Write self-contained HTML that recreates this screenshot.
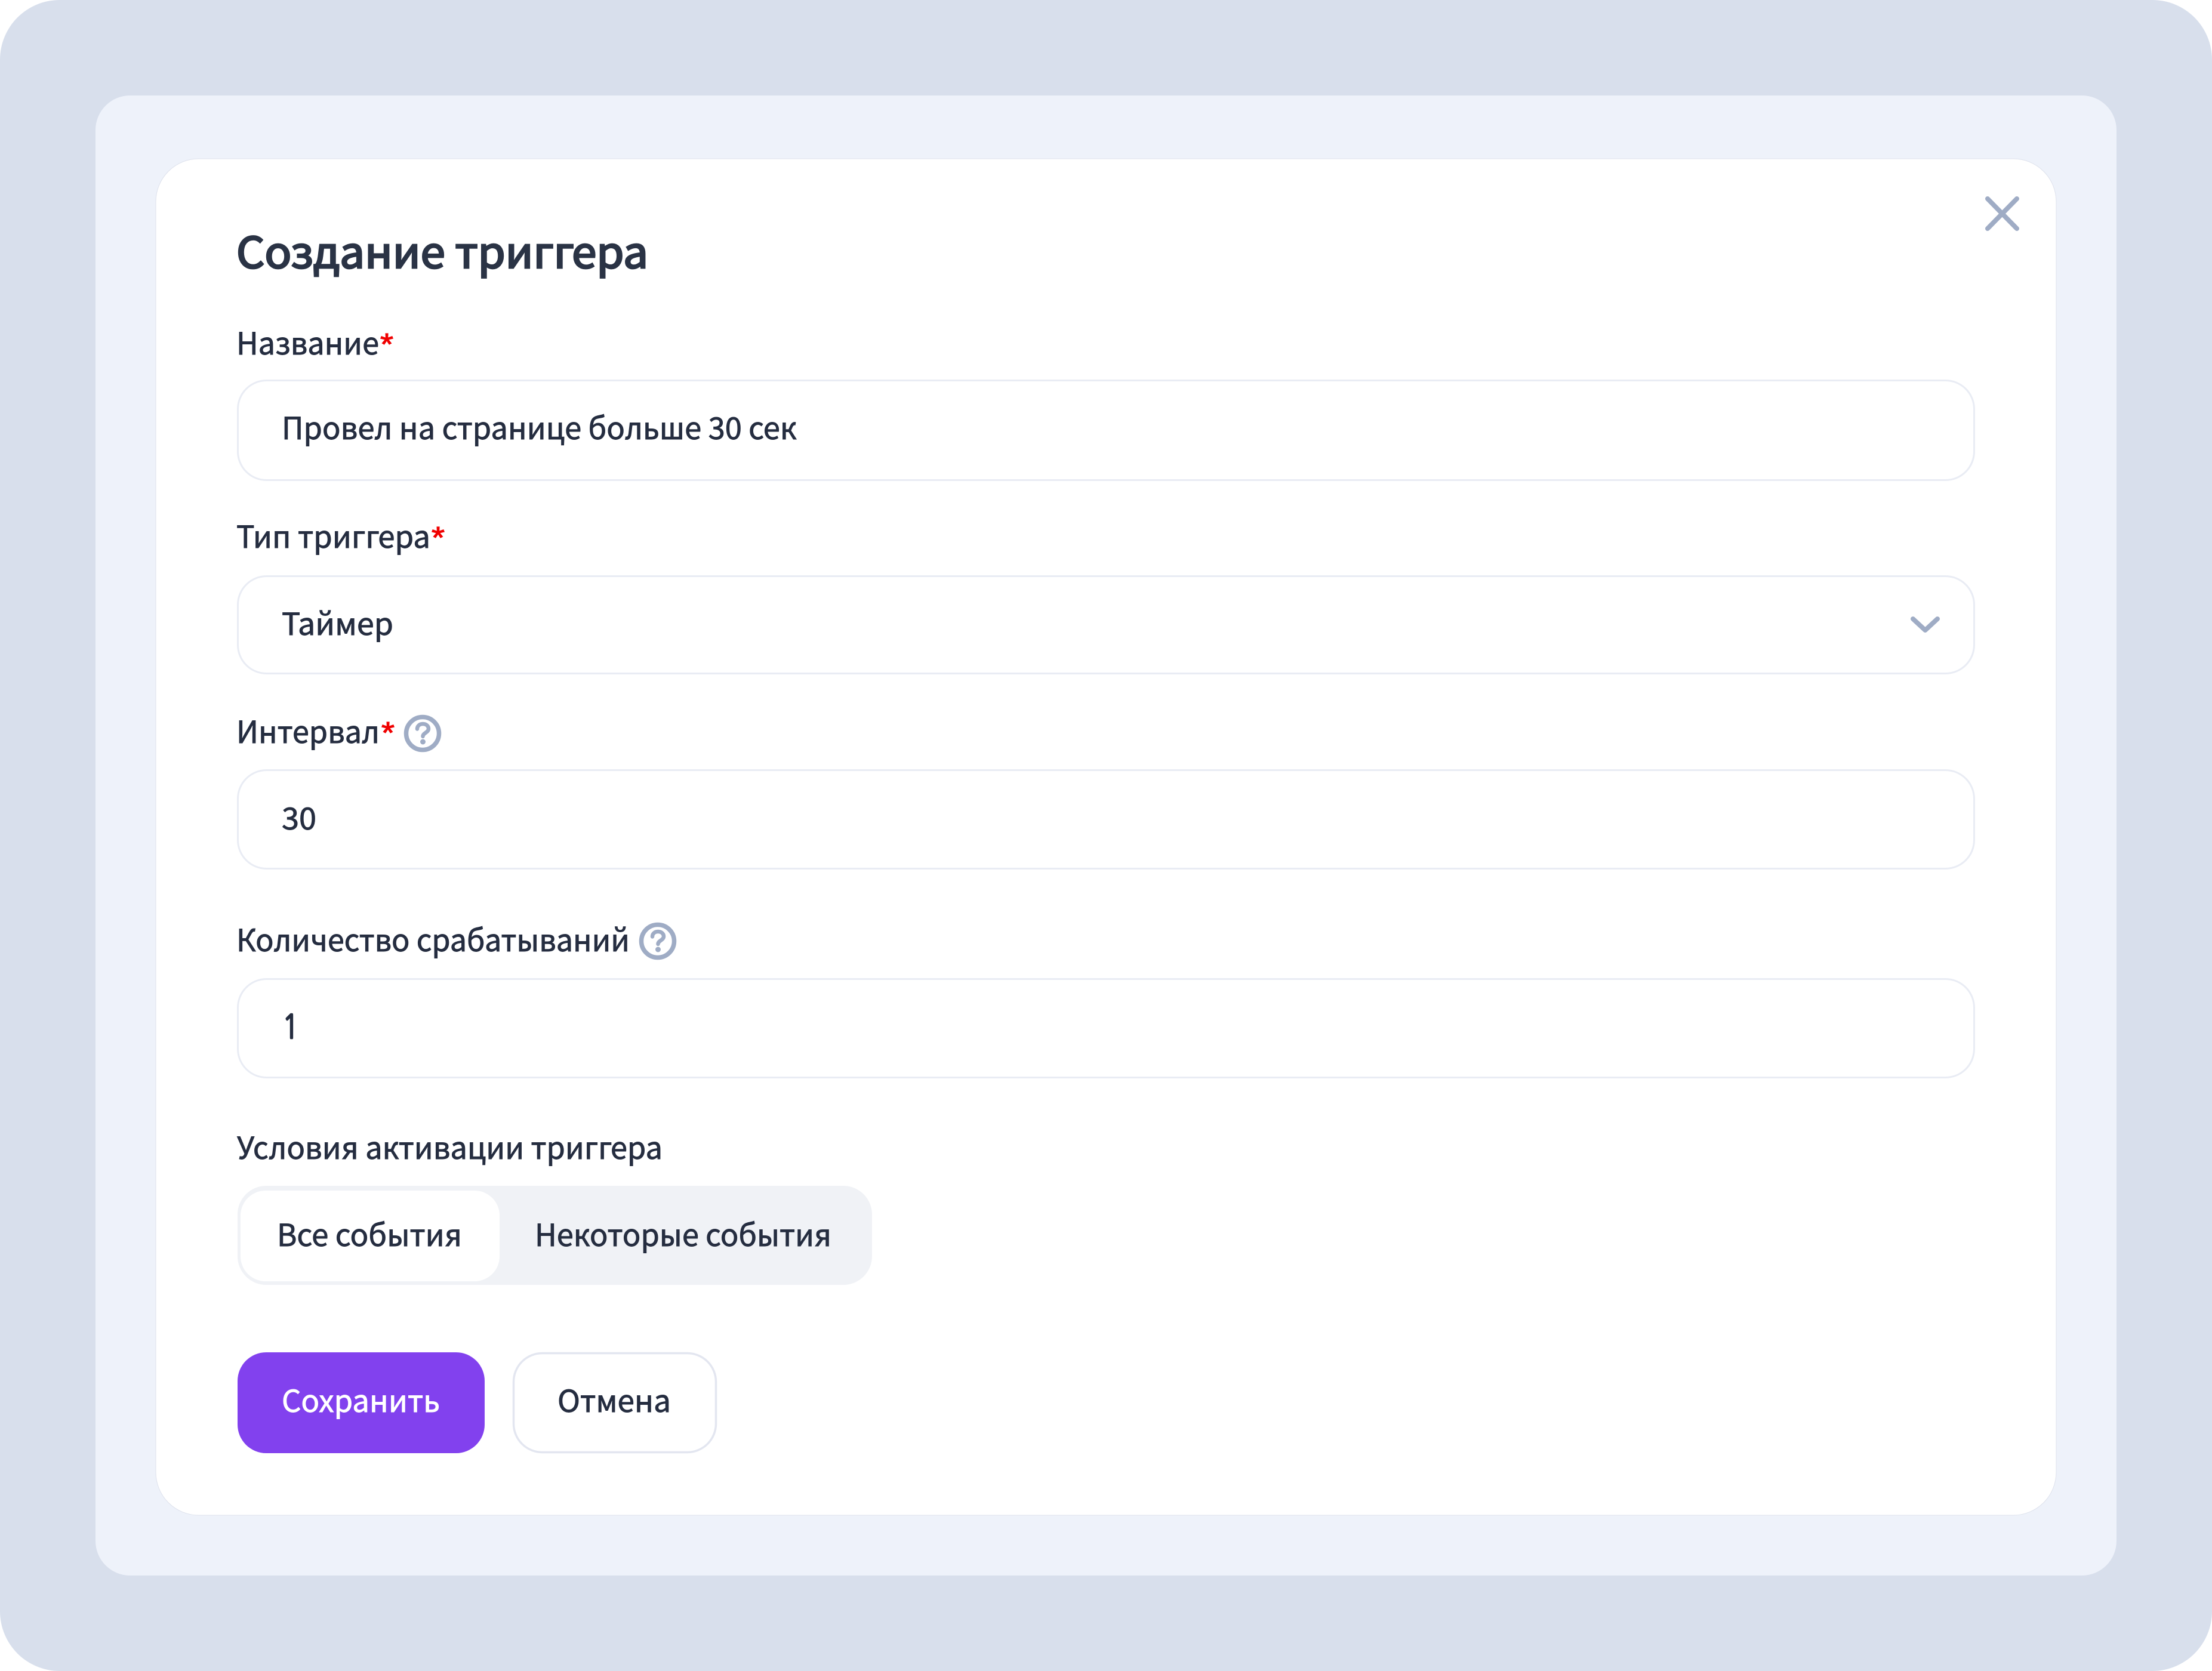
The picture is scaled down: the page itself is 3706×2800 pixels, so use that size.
<!DOCTYPE html>
<html lang="ru">
<head>
<meta charset="utf-8">
<title>Создание триггера</title>
<style>
html,body{margin:0;padding:0;background:#fff;width:3706px;height:2800px;overflow:hidden}
svg{display:block}
text{font-family:"Noto Sans CJK SC","Liberation Sans",sans-serif;font-size:51px;fill:#252D40;stroke:#252D40;stroke-width:.9px;paint-order:stroke}
.t{font-size:72px;fill:#2A3345;stroke:#2A3345;stroke-width:2.8px}
.w{fill:#fff;stroke:#fff}
.s{fill:#F00000;stroke:#F00000;font-family:"Liberation Sans",sans-serif;stroke-width:1.2px}
.n{font-family:"NanumGothic","Liberation Sans",sans-serif;font-size:55px;stroke-width:2.6px}
</style>
</head>
<body>
<svg xmlns="http://www.w3.org/2000/svg" width="3706" height="2800" viewBox="0 0 3706 2800">
<rect x="0" y="0" width="3706" height="2800" rx="100" fill="#D8DFEC"/>
<rect x="160" y="160" width="3386" height="2480" rx="58" fill="#EEF2FA"/>
<rect x="261" y="266" width="3184" height="2273" rx="72" fill="#fff" stroke="#DDE1EC" stroke-width="1"/>

<text class="t" x="396" y="449" textLength="690" lengthAdjust="spacingAndGlyphs">Создание триггера</text>

<path d="M3330 333L3379 383M3379 333L3330 383" fill="none" stroke="#9FACC5" stroke-width="8" stroke-linecap="round"/>

<text x="396" y="594" textLength="239" lengthAdjust="spacingAndGlyphs">Название</text>
<text class="s" x="637" y="594" textLength="22" lengthAdjust="spacingAndGlyphs">*</text>
<rect x="398.500" y="637.500" width="2909" height="167" rx="48" fill="#fff" stroke="#E9ECF4" stroke-width="3"/>
<text x="472" y="736" textLength="863" lengthAdjust="spacingAndGlyphs">Провел на странице больше 30 сек</text>

<text x="396" y="918" textLength="325" lengthAdjust="spacingAndGlyphs">Тип триггера</text>
<text class="s" x="723" y="918" textLength="22" lengthAdjust="spacingAndGlyphs">*</text>
<rect x="398.500" y="965.500" width="2909" height="163" rx="48" fill="#fff" stroke="#E9ECF4" stroke-width="3"/>
<text x="472" y="1064" textLength="187" lengthAdjust="spacingAndGlyphs">Таймер</text>
<path d="M3205 1037L3225.500 1056L3246 1037" fill="none" stroke="#9FACC5" stroke-width="8" stroke-linecap="round" stroke-linejoin="round"/>

<text x="396" y="1245" textLength="240" lengthAdjust="spacingAndGlyphs">Интервал</text>
<text class="s" x="639" y="1245" textLength="22" lengthAdjust="spacingAndGlyphs">*</text>
<g fill="none" stroke="#9FACC5" stroke-linecap="round" stroke-linejoin="round">
<circle cx="708" cy="1229" r="27.500" stroke-width="7.500"/>
<path d="M699 1221.500c0-5 4-8.500 9.500-8.500s9.500 3.500 9.500 8c0 6.500-9.500 7-9.500 13" stroke-width="6.500"/>
</g>
<circle cx="708.500" cy="1243" r="4.500" fill="#9FACC5"/>
<rect x="398.500" y="1290.500" width="2909" height="165" rx="48" fill="#fff" stroke="#E9ECF4" stroke-width="3"/>
<text x="472" y="1390" textLength="58" lengthAdjust="spacingAndGlyphs">30</text>

<text x="396" y="1594" textLength="659" lengthAdjust="spacingAndGlyphs">Количество срабатываний</text>
<g fill="none" stroke="#9FACC5" stroke-linecap="round" stroke-linejoin="round">
<circle cx="1102" cy="1577" r="27.500" stroke-width="7.500"/>
<path d="M1093 1569.500c0-5 4-8.500 9.500-8.500s9.500 3.500 9.500 8c0 6.500-9.500 7-9.500 13" stroke-width="6.500"/>
</g>
<circle cx="1102.500" cy="1591" r="4.500" fill="#9FACC5"/>
<rect x="398.500" y="1640.500" width="2909" height="165" rx="48" fill="#fff" stroke="#E9ECF4" stroke-width="3"/>
<text class="n" x="473" y="1740" textLength="28" lengthAdjust="spacingAndGlyphs">1</text>

<text x="397" y="1942" textLength="713" lengthAdjust="spacingAndGlyphs">Условия активации триггера</text>
<rect x="398" y="1987" width="1063" height="166" rx="48" fill="#F0F2F6"/>
<rect x="403" y="1995" width="434" height="152" rx="42" fill="#fff"/>
<text x="464" y="2088" textLength="310" lengthAdjust="spacingAndGlyphs">Все события</text>
<text x="896" y="2088" textLength="497" lengthAdjust="spacingAndGlyphs">Некоторые события</text>

<rect x="398" y="2266" width="414" height="169" rx="48" fill="#8241EE"/>
<text class="w" x="472" y="2366" textLength="265" lengthAdjust="spacingAndGlyphs">Сохранить</text>
<rect x="860.500" y="2267.500" width="339" height="166" rx="48" fill="#fff" stroke="#E3E6F0" stroke-width="3.500"/>
<text x="934" y="2366" textLength="190" lengthAdjust="spacingAndGlyphs">Отмена</text>
</svg>
</body>
</html>
